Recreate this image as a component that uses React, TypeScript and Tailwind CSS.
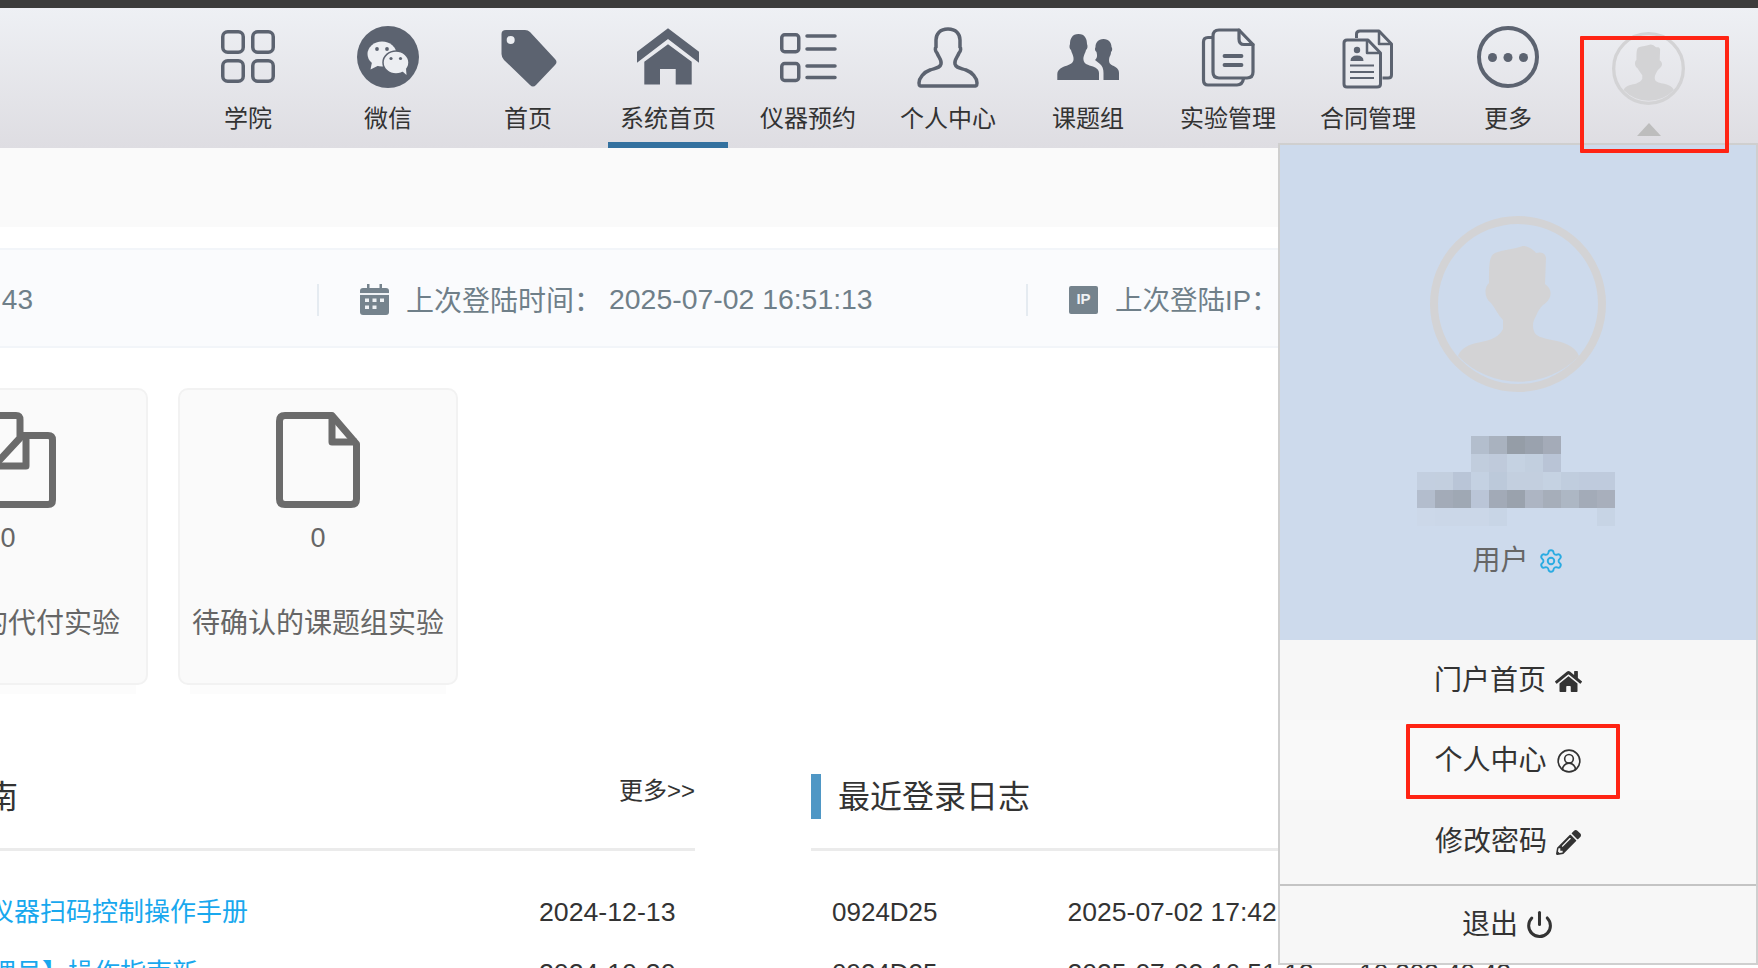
import React from 'react';
import { Settings, CircleUserRound, Power } from 'lucide-react';
import { FaHome, FaPencilAlt } from 'react-icons/fa';

const INK = '#5c6370';

const Svg = ({ children }: { children: React.ReactNode }) => (
  <svg width="64" height="64" viewBox="0 0 64 64" fill="none">{children}</svg>
);

const GridIcon = () => (
  <Svg>
    <g stroke={INK} strokeWidth="3.5">
      <rect x="6.75" y="5.75" width="20.5" height="20.5" rx="5" />
      <rect x="36.75" y="5.75" width="20.5" height="20.5" rx="5" />
      <rect x="6.75" y="34.75" width="20.5" height="20.5" rx="5" />
      <rect x="36.75" y="34.75" width="20.5" height="20.5" rx="5" />
    </g>
  </Svg>
);

const WechatIcon = () => (
  <Svg>
    <circle cx="32" cy="31" r="31" fill={INK} />
    <ellipse cx="26" cy="28" rx="14.5" ry="12.5" fill="#eceef2" />
    <path d="M16 36l-1.5 7.5 8-4z" fill="#eceef2" />
    <ellipse cx="40" cy="36.500" rx="13" ry="11.500" fill="#eceef2" stroke={INK} strokeWidth="1.500" />
    <path d="M46 45l4.500 4-.5-6.500z" fill="#eceef2" />
    <g fill={INK}>
      <circle cx="21" cy="23" r="1.900" />
      <circle cx="31" cy="23" r="1.900" />
      <circle cx="35" cy="32.500" r="1.600" />
      <circle cx="44.500" cy="32.500" r="1.600" />
    </g>
  </Svg>
);

const TagIcon = () => (
  <Svg>
    <path
      d="M10 4H29Q32 4 34 6L59 33Q62 36 59 39L40 59Q37 62 34 59L8 34Q5.500 31 5.500 28V8Q5.500 4 10 4Z"
      fill={INK}
    />
    <circle cx="14.700" cy="14" r="4" fill="#eceef2" />
  </Svg>
);

const HomeIcon = () => (
  <Svg>
    <path d="M32 2.300L63 25.700V36.700L32 13L1 36.700V25.700Z" fill={INK} />
    <path d="M32 18.300L55.700 35.700V58.500H39.700V43H24V58.500H8.300V35.700Z" fill={INK} />
  </Svg>
);

const ListIcon = () => (
  <Svg>
    <g stroke={INK} strokeWidth="3.500" strokeLinecap="round">
      <rect x="5.750" y="8.750" width="17" height="17" rx="3" />
      <rect x="5.750" y="37.500" width="17" height="17" rx="3" />
      <path d="M31 10H59M31 23H59M31 40H59M31 51.500H59" />
    </g>
  </Svg>
);

const PersonIcon = () => (
  <Svg>
    <path
      d="M32 3C24 3 20 8 20 14V21C19 22 19 25 21 27C23 32 26 34 25 38C24 42 20 42 14 44C8 46 3 52 3 57C3 60 4 60 7 60H57C60 60 61 60 61 57C61 52 56 46 50 44C44 42 40 42 39 38C38 34 41 32 43 27C45 25 45 22 44 21V14C44 8 40 3 32 3Z"
      stroke={INK}
      strokeWidth="3.500"
    />
  </Svg>
);

const TeamIcon = () => (
  <Svg>
    <path
      d="M22.500 8C16 8 14 13 14 18C13 20 13.500 23 15 24C16 28 18 30 17.500 34C17 38 12 39 7 41C3 43 1.300 45 1.300 48V54H43V47C43 44 41 42 37 40.500C32 39 28 38 27.500 34C27 30 29 28 30 24C31.500 23 32 20 31 18C31 13 29 8 22.500 8Z"
      fill={INK}
    />
    <path
      d="M47.500 13C42 13 39.500 17 39.500 21C38.500 23 39 25 40.500 26C41 29 42 31 39 34L44 38C46.500 40 47.500 43 47.500 47V54H63V47C63 43 60 41 56.500 39.500C53 38 52.500 35 53.500 31C54.500 29 55 28 55 26C56.500 25 56.500 22 55.500 21C55.500 17 53 13 47.500 13Z"
      fill={INK}
    />
  </Svg>
);

const DocsIcon = () => (
  <Svg>
    <g stroke={INK} strokeWidth="3.200" strokeLinecap="round" strokeLinejoin="round">
      <path d="M16 11.500H12Q7.500 11.500 7.500 16V54Q7.500 59 12 59H41Q46.500 59 47.500 52.500" />
      <path d="M23 4H43L57 18.500V46Q57 52 51 52H23Q17 52 17 46V10Q17 4 23 4Z" />
      <path d="M43 4V13Q43 18.500 48 18.500H57" />
      <path d="M28.500 30H45.500M28.500 39H45.500" strokeWidth="3.800" />
    </g>
  </Svg>
);

const ContractIcon = () => (
  <Svg>
    <g stroke={INK} strokeWidth="3" strokeLinejoin="round">
      <path d="M20.500 12V8Q20.500 5 24 5H43L55.500 18V49Q55.500 52 52 52H46.500" />
      <path d="M43 5V18H55.500" strokeWidth="2.500" />
      <path d="M11 14H32L44.500 27V58Q44.500 61 41 61H11Q8 61 8 58V17Q8 14 11 14Z" fill="#e9eaee" />
      <path d="M31 14V27H44.500" strokeWidth="2.500" />
      <path d="M14 39.500H38M14 46H38M14 52H38" strokeWidth="2" />
    </g>
    <circle cx="21" cy="24" r="3.200" fill={INK} />
    <path d="M14.500 35Q14.500 29.500 21 29.500Q27.500 29.500 27.500 35Z" fill={INK} />
  </Svg>
);

const MoreIcon = () => (
  <Svg>
    <circle cx="32" cy="31" r="29" stroke={INK} strokeWidth="4" />
    <g fill={INK}>
      <circle cx="16.500" cy="31.500" r="4.500" />
      <circle cx="32" cy="31.500" r="4.500" />
      <circle cx="47.500" cy="31.500" r="4.500" />
    </g>
  </Svg>
);

// same silhouette is used in the nav bar and in the panel
const Avatar = ({ size }: { size: number }) => (
  <svg width={size} height={size} viewBox="0 0 176 176" fill="none">
    <circle cx="88" cy="88" r="84" stroke="#d3d3d5" strokeWidth="8" />
    <path
      d="M92.700 30C85 33 72 34 65 37C59 40 59 48 59 67C54 71 54 82 61 87C65 92 68 99 73 104V113C70 119 65 122 59 124C50 127 33 127 28 140A84 84 0 0 0 149 140C145 129 132 126 122 124C112 122 105 120 104 115C102 110 103 105 106 100C108 95 110 92 113 89C120 85 125 75 115 68L116 42C115 36 110 36 106 37C103 33 97 30 92.700 30Z"
      fill="#d3d3d5"
    />
  </svg>
);

const FileIcon = () => (
  <svg width="84" height="96" viewBox="0 0 84 96" fill="none">
    <path
      d="M9 3.500H56L80.500 32V87Q80.500 92.500 75 92.500H9Q3.500 92.500 3.500 87V9Q3.500 3.500 9 3.500Z"
      stroke="#6b6b6b"
      strokeWidth="7"
      strokeLinejoin="round"
    />
    <path d="M56 3.500V30H80.500" stroke="#6b6b6b" strokeWidth="7" strokeLinejoin="round" />
  </svg>
);

const FilesIcon = () => (
  <svg width="96" height="96" viewBox="0 0 96 96" fill="none">
    <g stroke="#6b6b6b" strokeWidth="7" strokeLinejoin="round">
      <path d="M8 3.500H56Q60 3.500 60 8V26L34 54V70H8Q3.500 70 3.500 66V8Q3.500 3.500 8 3.500Z" />
      <path d="M34 54H66V24" />
      <path d="M62 23.500H88Q92.500 23.500 92.500 28V88Q92.500 92.500 88 92.500H34Q30 92.500 30 88V60" />
    </g>
  </svg>
);

const navItems = [
  { label: '学院', icon: <GridIcon /> },
  { label: '微信', icon: <WechatIcon /> },
  { label: '首页', icon: <TagIcon /> },
  { label: '系统首页', icon: <HomeIcon />, active: true },
  { label: '仪器预约', icon: <ListIcon /> },
  { label: '个人中心', icon: <PersonIcon /> },
  { label: '课题组', icon: <TeamIcon /> },
  { label: '实验管理', icon: <DocsIcon /> },
  { label: '合同管理', icon: <ContractIcon /> },
  { label: '更多', icon: <MoreIcon /> },
];

// the name under the avatar is pixelated in the picture
const mosaic = [
  ['', '', '', 'bg-[#b3becd]', 'bg-[#a9b2bf]', 'bg-[#959da7]', 'bg-[#9aa2ae]', 'bg-[#a4abb8]', '', '', ''],
  ['', '', '', 'bg-[#c1cddd]', 'bg-[#bfcadb]', 'bg-[#c5d2e2]', 'bg-[#c2cfdf]', 'bg-[#b9c4d6]', '', '', ''],
  ['bg-[#c3cfe0]', 'bg-[#c3cfdf]', 'bg-[#b9c5d7]', 'bg-[#c4d1e2]', 'bg-[#bcc9da]', 'bg-[#c3cfdf]', 'bg-[#c3cfdf]', 'bg-[#c5d2e2]', 'bg-[#c0cdde]', 'bg-[#bfcbdd]', 'bg-[#bfcbdd]'],
  ['bg-[#b3bdcd]', 'bg-[#a3abb8]', 'bg-[#9fa8b4]', 'bg-[#bac5d7]', 'bg-[#a2aab7]', 'bg-[#9aa2ad]', 'bg-[#adb5c3]', 'bg-[#a6aeba]', 'bg-[#adb7c4]', 'bg-[#a3abb8]', 'bg-[#a8afbc]'],
  ['bg-[#ccd8e9]', 'bg-[#cbd7e8]', 'bg-[#cbd7e8]', 'bg-[#cbd7e8]', 'bg-[#c8d5e6]', '', '', '', '', '', 'bg-[#c7d4e5]'],
];

const menuItems = [
  { label: '门户首页', icon: <FaHome size={27} />, cls: 'h-[80px] bg-[#f7f7f7] pt-[2px]' },
  { label: '个人中心', icon: <CircleUserRound size={26} strokeWidth={1.5} />, cls: 'h-[80px] bg-[#f9f9f9] pt-[1px]' },
  { label: '修改密码', icon: <FaPencilAlt size={25} />, cls: 'h-[84px] bg-[#f7f7f7]' },
];

const guideRows = [
  { title: '仪器扫码控制操作手册', date: '2024-12-13', cls: 'ml-[-12px] w-[551px]' },
  { title: '理员】操作指南新', date: '2024-10-30', cls: 'ml-[-10px] w-[549px]' },
];

const logRows = [
  { code: '0924D25', time: '2025-07-02 17:42:08', ip: '10.203.40.43' },
  { code: '0924D25', time: '2025-07-02 16:51:13', ip: '10.203.40.43' },
];

export default function App() {
  return (
    <div className="relative w-[1758px] h-[968px] overflow-hidden bg-white font-['Liberation_Sans','Noto_Sans_CJK_SC',sans-serif]">
      <div className="h-[8px] bg-[#3c3c3c]" />

      {/* Nav */}
      <div className="flex h-[140px] pl-[178px] bg-gradient-to-b from-[#eef0f4] to-[#dedde2]">
        {navItems.map((item) => (
          <div key={item.label} className="flex flex-col items-center w-[140px] pt-[18px]">
            {item.icon}
            <span className="mt-[12px] text-[24px] leading-[34px] text-[#333]">{item.label}</span>
            {item.active && <span className="mt-auto w-[120px] h-[6px] bg-[#33719f]" />}
          </div>
        ))}
        <div className="flex flex-col items-center w-[140px] pt-[24px]">
          <Avatar size={73} />
          <span className="mt-[18px] ml-[2px] w-0 h-0 border-x-[12px] border-x-transparent border-b-[13px] border-b-[#bdbdbd]" />
        </div>
      </div>

      {/* Page body */}
      <div className="h-[79px] bg-[#fafafa]" />

      <div className="flex items-center h-[100px] pt-[3px] mt-[21px] bg-[#fafbfd] border-y-2 border-[#f2f5f9] text-[28px] text-[#6f7f89] whitespace-nowrap">
        <div className="flex justify-end w-[317px] pr-[284px]">
          <span>10.203.40.43</span>
        </div>
        <div className="w-[2px] h-[32px] bg-[#e5ebf1]" />
        <div className="flex items-center w-[707px] pl-[41px]">
          <svg width="29" height="31" viewBox="0 0 29 31">
            <path d="M3 4H26Q29 4 29 7V28Q29 31 26 31H3Q0 31 0 28V7Q0 4 3 4Z" fill="#75838d" />
            <rect x="0" y="9" width="29" height="2" fill="#eef1f4" />
            <rect x="7" y="0" width="2.500" height="7" fill="#75838d" />
            <rect x="19.500" y="0" width="2.500" height="7" fill="#75838d" />
            <g fill="#eef1f4">
              <rect x="5" y="14.500" width="4" height="3.500" />
              <rect x="12.500" y="14.500" width="4" height="3.500" />
              <rect x="20" y="14.500" width="4" height="3.500" />
              <rect x="5" y="21.500" width="4" height="3.500" />
              <rect x="12.500" y="21.500" width="4" height="3.500" />
            </g>
          </svg>
          <span className="ml-[17px] mt-[4px]">上次登陆时间：</span>
          <span className="ml-[7px] text-[28.4px]">2025-07-02 16:51:13</span>
        </div>
        <div className="w-[2px] h-[32px] bg-[#e5ebf1]" />
        <div className="flex items-center pl-[41px]">
          <span className="flex items-center justify-center w-[29px] h-[28px] rounded-[2px] bg-[#75838d] text-[15px] font-bold text-[#eef1f4]">
            IP
          </span>
          <span className="ml-[17px] mt-[2px] text-[27.5px]">上次登陆IP：</span>
        </div>
      </div>

      {/* Stat cards */}
      <div className="flex gap-[30px] mt-[40px] ml-[-132px]">
        {[
          { label: '待确认的代付实验', icon: <FilesIcon /> },
          { label: '待确认的课题组实验', icon: <FileIcon /> },
        ].map((card) => (
          <div
            key={card.label}
            className="relative flex flex-col items-center w-[280px] h-[297px] pt-[22px] rounded-[10px] border-2 border-[#f2f2f2] bg-[#fafafa] text-[#666]"
          >
            {card.icon}
            <span className="mt-[12px] text-[27px] leading-[36px]">0</span>
            <span className="mt-[48px] text-[28px] leading-[40px] whitespace-nowrap">{card.label}</span>
            <span className="absolute bottom-[-11px] left-[10px] right-[10px] h-[9px] bg-[#fcfcfc]" />
          </div>
        ))}
      </div>

      {/* Lists */}
      <div className="flex gap-[116px] mt-[89px] whitespace-nowrap">
        <div className="w-[695px] shrink-0">
          <div className="flex justify-between h-[74px] border-b-[3px] border-[#ebebeb] box-content">
            <span className="ml-[-46px] text-[32px] leading-[46px] text-[#333]">指南</span>
            <span className="text-[24px] leading-[34px] text-[#333]">更多&gt;&gt;</span>
          </div>
          <div className="pt-[31px]">
            {guideRows.map((row) => (
              <div key={row.date} className="flex items-center h-[61px]">
                <span className={`shrink-0 text-[26px] text-[#18a8ee] ${row.cls}`}>{row.title}</span>
                <span className="text-[26.7px] text-[#333]">{row.date}</span>
              </div>
            ))}
          </div>
        </div>

        <div className="w-[700px] shrink-0">
          <div className="flex items-start h-[74px] border-b-[3px] border-[#ebebeb] box-content w-[467px]">
            <span className="w-[10px] h-[45px] bg-[#4f97c5]" />
            <span className="ml-[17px] text-[32px] leading-[46px] text-[#333]">最近登录日志</span>
          </div>
          <div className="pt-[31px]">
            {logRows.map((row) => (
              <div key={row.time} className="flex items-center h-[61px] pl-[21px] text-[#333]">
                <span className="w-[240px] text-[26px]">{row.code}</span>
                <span className="w-[297px] text-[26.5px]">{row.time}</span>
                <span className="text-[26px]">{row.ip}</span>
              </div>
            ))}
          </div>
        </div>
      </div>

      {/* User dropdown */}
      <div className="absolute left-[1278px] top-[143px] w-[480px] h-[822px] border-2 border-[#cfcfcf] bg-[#f7f7f7]">
        <div className="flex flex-col items-center h-[495px] pt-[71px] bg-[#cddaec]">
          <Avatar size={176} />
          <div className="grid grid-cols-[repeat(11,18px)] auto-rows-[18px] mt-[44px] mr-[5px]">
            {mosaic.flat().map((cls, i) => (
              <span key={i} className={cls} />
            ))}
          </div>
          <div className="flex items-center gap-[9px] mt-[19px] h-[32px] text-[28px] text-[#666]">
            <span>用户</span>
            <Settings size={26} strokeWidth={1.75} className="text-[#29abe2]" />
          </div>
        </div>

        {menuItems.map((item) => (
          <div
            key={item.label}
            className={`flex items-center justify-center gap-[9px] pr-[20px] text-[28px] text-[#333] ${item.cls}`}
          >
            <span>{item.label}</span>
            {item.icon}
          </div>
        ))}
        <div className="flex items-center justify-center gap-[7px] h-[77px] pr-[20px] border-t-2 border-[#c4c4c4] box-content text-[28px] text-[#333]">
          <span>退出</span>
          <Power size={29} strokeWidth={2.5} />
        </div>
      </div>

      {/* Annotation boxes */}
      <div className="absolute left-[1580px] top-[36px] w-[149px] h-[117px] border-[4px] border-[#ff2414] rounded-[1px]" />
      <div className="absolute left-[1406px] top-[724px] w-[214px] h-[75px] border-[4px] border-[#ff2414] rounded-[1px]" />
    </div>
  );
}
